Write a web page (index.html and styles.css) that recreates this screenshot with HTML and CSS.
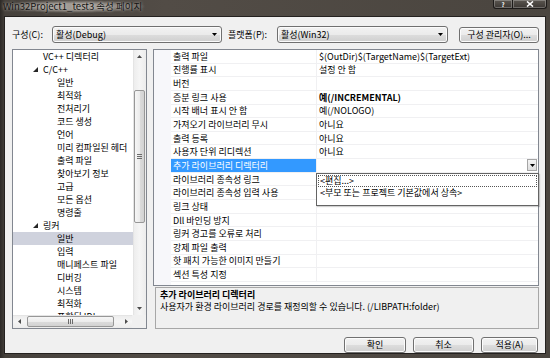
FILE: index.html
```html
<!DOCTYPE html>
<html>
<head>
<meta charset="utf-8">
<title>Win32Project1_test3 속성 페이지</title>
<link rel="stylesheet" href="styles.css">
</head>
<body>

<div class="window">
  <div class="titlebar">
    <span class="title">Win32Project1_test3 속성 페이지</span>
    <div class="caption">
      <span class="cap cap-help">?</span>
      <span class="cap cap-close"><svg width="8" height="6"><path d="M1 0.5l6 5M7 0.5l-6 5" stroke="#fff" stroke-width="1.6"/></svg></span>
    </div>
  </div>

  <div class="client">
    <div class="toolbar">
      <span class="lbl lbl-cfg">구성(C):</span>
      <div class="combo combo-cfg">활성(Debug)<svg class="drop" width="5" height="3"><polygon points="0,0 5,0 2.5,3"/></svg></div>
      <span class="lbl lbl-plat">플랫폼(P):</span>
      <div class="combo combo-plat">활성(Win32)<svg class="drop" width="5" height="3"><polygon points="0,0 5,0 2.5,3"/></svg></div>
      <button class="btn btn-mgr">구성 관리자(O)...</button>
    </div>

    <div class="main">
      <!-- 왼쪽 트리 -->
      <div class="tree">
        <div class="tree-body">
          <div class="tree-items">
            <div class="node">VC++ 디렉터리</div>
            <div class="node"><svg class="tgl" width="5" height="5"><polygon points="5,0 5,5 0,5"/></svg>C/C++</div>
            <div class="node child">일반</div>
            <div class="node child">최적화</div>
            <div class="node child">전처리기</div>
            <div class="node child">코드 생성</div>
            <div class="node child">언어</div>
            <div class="node child">미리 컴파일된 헤더</div>
            <div class="node child">출력 파일</div>
            <div class="node child">찾아보기 정보</div>
            <div class="node child">고급</div>
            <div class="node child">모든 옵션</div>
            <div class="node child">명령줄</div>
            <div class="node"><svg class="tgl" width="5" height="5"><polygon points="5,0 5,5 0,5"/></svg>링커</div>
            <div class="node child selected">일반</div>
            <div class="node child">입력</div>
            <div class="node child">매니페스트 파일</div>
            <div class="node child">디버깅</div>
            <div class="node child">시스템</div>
            <div class="node child">최적화</div>
            <div class="node child">포함된 IDL</div>
          </div>
          <div class="vscroll">
            <div class="sb-arrow"><svg width="5" height="3"><polygon points="0,3 5,3 2.5,0"/></svg></div>
            <div class="vtrack">
              <div class="vthumb"><svg width="5" height="5"><path d="M0 0.5h5M0 2.5h5M0 4.5h5" stroke="#6b6b6b"/></svg></div>
            </div>
            <div class="sb-arrow"><svg width="5" height="3"><polygon points="0,0 5,0 2.5,3"/></svg></div>
          </div>
        </div>
        <div class="tree-foot">
          <div class="hscroll">
            <div class="sb-arrow"><svg width="3" height="5"><polygon points="3,0 3,5 0,2.5"/></svg></div>
            <div class="htrack">
              <div class="hthumb"><svg width="5" height="5"><path d="M0.5 0v5M2.5 0v5M4.5 0v5" stroke="#6b6b6b"/></svg></div>
            </div>
            <div class="sb-arrow"><svg width="3" height="5"><polygon points="0,0 0,5 3,2.5"/></svg></div>
          </div>
          <div class="corner"></div>
        </div>
      </div>

      <!-- 오른쪽 속성 그리드 -->
      <div class="right">
        <div class="grid">
          <div class="row"><span class="name">출력 파일</span><span class="val">$(OutDir)$(TargetName)$(TargetExt)</span></div>
          <div class="row"><span class="name">진행률 표시</span><span class="val">설정 안 함</span></div>
          <div class="row"><span class="name">버전</span><span class="val"></span></div>
          <div class="row"><span class="name">증분 링크 사용</span><span class="val bold">예(/INCREMENTAL)</span></div>
          <div class="row"><span class="name">시작 배너 표시 안 함</span><span class="val">예(/NOLOGO)</span></div>
          <div class="row"><span class="name">가져오기 라이브러리 무시</span><span class="val">아니요</span></div>
          <div class="row"><span class="name">출력 등록</span><span class="val">아니요</span></div>
          <div class="row"><span class="name">사용자 단위 리디렉션</span><span class="val">아니요</span></div>
          <div class="row row-sel"><span class="name">추가 라이브러리 디렉터리</span><span class="val"><span class="val-btn"><svg width="5" height="3"><polygon points="0,0 5,0 2.5,3"/></svg></span></span></div>
          <div class="row"><span class="name">라이브러리 종속성 링크</span><span class="val"></span></div>
          <div class="row"><span class="name">라이브러리 종속성 입력 사용</span><span class="val"></span></div>
          <div class="row"><span class="name">링크 상태</span><span class="val"></span></div>
          <div class="row"><span class="name">Dll 바인딩 방지</span><span class="val"></span></div>
          <div class="row"><span class="name">링커 경고를 오류로 처리</span><span class="val"></span></div>
          <div class="row"><span class="name">강제 파일 출력</span><span class="val"></span></div>
          <div class="row"><span class="name">핫 패치 가능한 이미지 만들기</span><span class="val"></span></div>
          <div class="row"><span class="name">섹션 특성 지정</span><span class="val"></span></div>

          <div class="popup">
            <div class="pop-item focus">&lt;편집...&gt;</div>
            <div class="pop-item">&lt;부모 또는 프로젝트 기본값에서 상속&gt;</div>
          </div>
        </div>
        <div class="desc">
          <div class="desc-title">추가 라이브러리 디렉터리</div>
          <div>사용자가 환경 라이브러리 경로를 재정의할 수 있습니다. (/LIBPATH:folder)</div>
        </div>
      </div>
    </div>

    <div class="footer">
      <button class="btn btn-ok">확인</button>
      <button class="btn btn-cancel">취소</button>
      <button class="btn btn-apply">적용(A)</button>
    </div>
  </div>
</div>

</body>
</html>
```

FILE: styles.css
```css
* {
  box-sizing: border-box;
}

body {
  margin: 0;
  width: 550px;
  height: 358px;
  overflow: hidden;
  font-family: "Noto Sans CJK KR", "Noto Sans", sans-serif;
  font-size: 9px;
  color: #000;
  background: #47423d;
}

svg {
  display: block;
}

.window {
  height: 358px;
  display: flex;
  flex-direction: column;
  background: linear-gradient(to right, #2c2926 0, #46413c 5px, #524c46 30%, #4a453f 100%);
}

/* 제목 표시줄 */
.titlebar {
  height: 17px;
  display: flex;
  justify-content: space-between;
  align-items: flex-start;
}

.title {
  margin-left: 2px;
  padding: 0 3px 0 1px;
  line-height: 13px;
  font-size: 9.5px;
  color: #141414;
  background: radial-gradient(ellipse at center, rgba(190,184,178,.75) 30%, rgba(190,184,178,0) 72%);
  text-shadow: 0 0 3px rgba(220,215,210,.8);
}

.caption {
  display: flex;
  margin-right: 3px;
}

.cap {
  height: 9px;
  display: flex;
  align-items: center;
  justify-content: center;
  color: #fff;
  font-weight: bold;
  font-size: 6px;
  line-height: 9px;
  border: 1px solid #1d1b19;
  border-top: none;
  background: linear-gradient(#5b5650, #3b3733);
  box-shadow: inset 0 0 0 1px rgba(255,255,255,.25);
}

.cap-help {
  width: 20px;
  border-radius: 0 0 0 3px;
}

.cap-close {
  width: 34px;
  border-left: none;
  border-radius: 0 0 3px 0;
}

/* 클라이언트 영역 */
.client {
  flex: 1;
  margin: 0 5px 5px;
  padding: 9px 6px 0 7px;
  background: #f0f0f0;
  box-shadow: 0 0 0 1px #24211f;
  display: flex;
  flex-direction: column;
}

.toolbar {
  height: 17px;
  display: flex;
  align-items: center;
}

.lbl {
  line-height: 17px;
}

.lbl-cfg {
  width: 40px;
}

.lbl-plat {
  width: 49px;
  margin-left: 6px;
}

.combo {
  height: 17px;
  display: flex;
  align-items: center;
  justify-content: space-between;
  padding: 0 4px 0 3px;
  border: 1px solid #707070;
  border-radius: 3px;
  background: linear-gradient(#f2f2f2 0%, #ebebeb 50%, #dddddd 51%, #cfcfcf 100%);
  box-shadow: inset 0 0 0 1px #fbfbfb;
}

.combo-cfg {
  width: 170px;
}

.combo-plat {
  width: 171px;
}

.btn {
  font: inherit;
  color: #000;
  height: 16px;
  padding: 0;
  line-height: 14px;
  border: 1px solid #707070;
  border-radius: 3px;
  background: linear-gradient(#f2f2f2 0%, #ebebeb 50%, #dddddd 51%, #cfcfcf 100%);
  box-shadow: inset 0 0 0 1px #fcfcfc;
}

.btn-mgr {
  width: 80px;
  margin-left: auto;
}

/* 본문 */
.main {
  margin-top: 6px;
  height: 280px;
  display: flex;
  gap: 6px;
}

.tree {
  width: 135px;
  border: 1px solid #828790;
  background: #fff;
  display: flex;
  flex-direction: column;
}

.tree-body {
  height: 265px;
  display: flex;
}

.tree-items {
  width: 120px;
  overflow: hidden;
}

.node {
  height: 13px;
  line-height: 13px;
  padding-left: 20px;
  display: flex;
  align-items: center;
  white-space: nowrap;
}

.node:not(.child) {
  padding-left: 30px;
}

.node .tgl {
  margin-left: -10px;
  margin-right: 5px;
  fill: #262626;
}

.node.child {
  padding-left: 44px;
}

.node.selected {
  background: #cfd2dd;
}

.vscroll {
  width: 13px;
  display: flex;
  flex-direction: column;
  background: linear-gradient(to right, #dcdcdc 0, #ededed 1px, #f5f5f5 50%, #ececec 100%);
}

.sb-arrow {
  width: 13px;
  height: 13px;
  display: flex;
  align-items: center;
  justify-content: center;
  fill: #4d4d4d;
}

.vtrack {
  flex: 1;
}

.vthumb {
  margin: 27px 1px 0 1px;
  height: 133px;
  border: 1px solid #979797;
  border-radius: 2px;
  background: linear-gradient(to right, #f6f6f6 0%, #ececec 50%, #dcdcdc 51%, #d2d2d2 100%);
  display: flex;
  align-items: center;
  justify-content: center;
}

.tree-foot {
  flex: 1;
  display: flex;
}

.hscroll {
  width: 119px;
  display: flex;
  background: linear-gradient(#dcdcdc 0, #ededed 1px, #f5f5f5 50%, #ececec 100%);
}

.hscroll .sb-arrow {
  width: 12px;
  height: 12px;
}

.htrack {
  flex: 1;
}

.hthumb {
  margin: 1px 0 0 2px;
  width: 87px;
  height: 11px;
  border: 1px solid #979797;
  border-radius: 2px;
  background: linear-gradient(#f6f6f6 0%, #ececec 50%, #dcdcdc 51%, #d2d2d2 100%);
  display: flex;
  align-items: center;
  justify-content: center;
}

.corner {
  flex: 1;
  background: #f0f0f0;
}

/* 속성 그리드 */
.right {
  width: 386px;
  display: flex;
  flex-direction: column;
  gap: 1px;
}

.grid {
  position: relative;
  height: 237px;
  border: 1px solid #828790;
  background: linear-gradient(to right, #f7f7fa 17px, #fff 17px);
}

.row {
  height: 13.65px;
  margin-left: 17px;
  display: flex;
}

.name,
.val {
  display: flex;
  align-items: center;
  padding-left: 2px;
  white-space: nowrap;
  border-bottom: 1px solid #f0f0f2;
}

.name {
  width: 146px;
  border-right: 1px solid #f0f0f2;
}

.val {
  flex: 1;
}

.val.bold {
  font-weight: bold;
}

.row-sel .name {
  background: #3399ff;
  color: #fff;
}

.val-btn {
  margin-left: auto;
  margin-right: 1px;
  width: 10px;
  height: 12px;
  border: 1px solid #a5a5a5;
  background: linear-gradient(#f4f4f4, #dedede);
  display: flex;
  align-items: center;
  justify-content: center;
}

.popup {
  position: absolute;
  left: 162px;
  top: 123px;
  width: 223px;
  height: 33px;
  padding: 1px;
  background: #fff;
  border: 1px solid #646464;
  box-shadow: 1px 1px 1px rgba(0,0,0,.18);
}

.pop-item {
  height: 12px;
  line-height: 12px;
  padding-left: 2px;
}

.pop-item.focus {
  outline: 1px dotted #555;
  outline-offset: -1px;
}

.desc {
  height: 42px;
  margin-left: 2px;
  padding: 0 0 0 4px;
  border: 1px solid #a7a7a7;
  line-height: 13px;
}

.desc-title {
  font-weight: bold;
  margin-bottom: -1px;
}

/* 하단 버튼 */
.footer {
  margin-top: 8px;
  display: flex;
  padding-left: 332px;
}

.btn-ok {
  width: 62px;
}

.btn-cancel {
  width: 61px;
  margin-left: 7px;
}

.btn-apply {
  width: 57px;
  margin-left: 7px;
}
```
